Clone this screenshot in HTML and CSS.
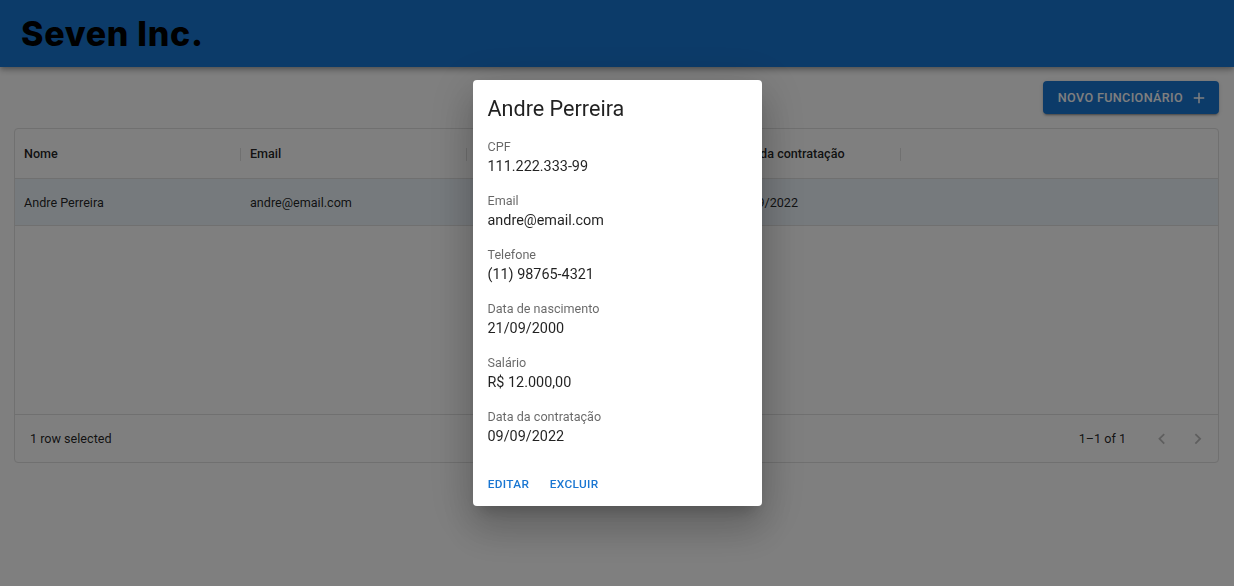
FILE: index.html
```html
<!DOCTYPE html>
<html lang="pt-BR">
<head>
<meta charset="utf-8">
<title>Seven Inc.</title>
<link rel="stylesheet" href="styles.css">
</head>
<body>
<header class="appbar">
  <h1 class="brand">Seven Inc.</h1>
</header>
<main class="page">
  <div class="toolbar">
    <button class="btn-contained">NOVO FUNCIONÁRIO
      <svg class="btn-icon" viewBox="0 0 24 24"><path d="M19 13h-6v6h-2v-6H5v-2h6V5h2v6h6v2z"/></svg>
    </button>
  </div>
  <section class="grid">
    <div class="grid-row grid-head">
      <div class="cell">Nome<span class="sep"></span></div>
      <div class="cell">Email<span class="sep"></span></div>
      <div class="cell"><span class="sep"></span></div>
      <div class="cell">Data da contratação<span class="sep"></span></div>
      <div class="cell filler"></div>
    </div>
    <div class="grid-row grid-body selected">
      <div class="cell">Andre Perreira</div>
      <div class="cell">andre@email.com</div>
      <div class="cell"></div>
      <div class="cell">09/09/2022</div>
      <div class="cell filler"></div>
    </div>
    <div class="grid-space"></div>
    <div class="grid-footer">
      <span class="sel-count">1 row selected</span>
      <div class="pager">
        <span class="pager-text">1–1 of 1</span>
        <span class="pager-btn"><svg viewBox="0 0 24 24"><path d="M15.41 16.59 10.83 12l4.58-4.59L14 6l-6 6 6 6 1.41-1.41z"/></svg></span>
        <span class="pager-btn"><svg viewBox="0 0 24 24"><path d="M8.59 16.59 13.17 12 8.59 7.41 10 6l6 6-6 6-1.41-1.41z"/></svg></span>
      </div>
    </div>
  </section>
</main>
<div class="backdrop">
  <div class="dialog">
    <h2 class="dialog-title">Andre Perreira</h2>
    <div class="dialog-content">
      <div class="field"><div class="label">CPF</div><div class="value">111.222.333-99</div></div>
      <div class="field"><div class="label">Email</div><div class="value">andre@email.com</div></div>
      <div class="field"><div class="label">Telefone</div><div class="value">(11) 98765-4321</div></div>
      <div class="field"><div class="label">Data de nascimento</div><div class="value">21/09/2000</div></div>
      <div class="field"><div class="label">Salário</div><div class="value">R$ 12.000,00</div></div>
      <div class="field"><div class="label">Data da contratação</div><div class="value">09/09/2022</div></div>
    </div>
    <div class="dialog-actions">
      <button class="btn-text">EDITAR</button>
      <button class="btn-text">EXCLUIR</button>
    </div>
  </div>
</div>
</body>
</html>
```

FILE: styles.css
```css
* { box-sizing: border-box; }
html, body { margin: 0; padding: 0; }
body {
  font-family: Roboto, "Liberation Sans", sans-serif;
  background: #fff;
  color: rgba(0,0,0,0.87);
  width: 1234px;
  height: 586px;
  overflow: hidden;
}
.appbar {
  height: 67px;
  background: #1976d2;
  display: flex;
  align-items: center;
  padding-left: 21px;
  box-shadow: 0 2px 4px -1px rgba(0,0,0,0.2), 0 4px 5px 0 rgba(0,0,0,0.14), 0 1px 10px 0 rgba(0,0,0,0.12);
}
.brand {
  margin: 0;
  font-family: Inter, "Noto Sans", sans-serif;
  font-weight: 800;
  font-size: 34px;
  line-height: 1;
  color: #000;
  letter-spacing: 0.7px;
}
.page {
  padding: 14px 15px 0 14px;
}
.toolbar {
  display: flex;
  justify-content: flex-end;
}
.btn-contained {
  display: inline-flex;
  align-items: center;
  height: 33px;
  padding: 0 10.8px 0 14.4px;
  border: 0;
  border-radius: 4px;
  background: #1976d2;
  color: #fff;
  font-family: Roboto, sans-serif;
  font-weight: 500;
  font-size: 12.6px;
  letter-spacing: 0.36px;
  box-shadow: 0 3px 1px -2px rgba(0,0,0,0.2), 0 2px 2px 0 rgba(0,0,0,0.14), 0 1px 5px 0 rgba(0,0,0,0.12);
}
.btn-icon {
  width: 18px;
  height: 18px;
  margin-left: 7.2px;
  fill: #fff;
}
.grid {
  margin-top: 14px;
  height: 335px;
  border: 1px solid #e0e0e0;
  border-radius: 4px;
  display: flex;
  flex-direction: column;
  font-size: 12.6px;
}
.grid-row {
  display: grid;
  grid-template-columns: 226px 226px 255px 179px 1fr;
  border-bottom: 1px solid #e0e0e0;
}
.grid-head { height: 50px; font-weight: 500; }
.grid-body { height: 47px; }
.selected { background: rgba(25,118,210,0.08); }
.cell {
  position: relative;
  display: flex;
  align-items: center;
  padding: 0 9px;
  white-space: nowrap;
  overflow: visible;
}
.sep {
  position: absolute;
  right: 0;
  top: 19px;
  width: 1px;
  height: 13px;
  background: #e0e0e0;
}
.grid-space { flex: 1; }
.grid-footer {
  height: 48px;
  border-top: 1px solid #e0e0e0;
  display: flex;
  align-items: center;
  justify-content: space-between;
}
.sel-count { margin-left: 15px; }
.pager {
  display: flex;
  align-items: center;
  padding-right: 2px;
}
.pager-text { margin-right: 18px; }
.pager-btn {
  width: 36px;
  height: 36px;
  display: flex;
  align-items: center;
  justify-content: center;
}
.pager-btn svg {
  width: 21.6px;
  height: 21.6px;
  fill: rgba(0,0,0,0.26);
}
.backdrop {
  position: fixed;
  inset: 0;
  background: rgba(0,0,0,0.5);
  display: flex;
  align-items: center;
  justify-content: center;
}
.dialog {
  width: 289px;
  height: 426px;
  background: #fff;
  border-radius: 4px;
  box-shadow: 0 11px 15px -7px rgba(0,0,0,0.2), 0 24px 38px 3px rgba(0,0,0,0.14), 0 9px 46px 8px rgba(0,0,0,0.12);
  display: flex;
  flex-direction: column;
}
.dialog-title {
  margin: 0;
  padding: 15px 15px 0;
  font-size: 21.6px;
  font-weight: 400;
  line-height: 28px;
  color: rgba(0,0,0,0.87);
}
.dialog-content {
  padding: 15px 15px 12px;
  display: flex;
  flex-direction: column;
  gap: 14px;
}
.label {
  font-size: 12.6px;
  line-height: 18px;
  color: rgba(0,0,0,0.6);
}
.value {
  font-size: 14.4px;
  line-height: 22px;
  color: rgba(0,0,0,0.87);
}
.dialog-actions {
  padding: 7px;
  display: flex;
  gap: 5px;
}
.btn-text {
  min-width: 58px;
  height: 33px;
  padding: 0 7.2px;
  border: 0;
  background: transparent;
  color: #1976d2;
  font-family: Roboto, sans-serif;
  font-weight: 500;
  font-size: 11.8px;
  letter-spacing: 0.36px;
  border-radius: 4px;
}
```
